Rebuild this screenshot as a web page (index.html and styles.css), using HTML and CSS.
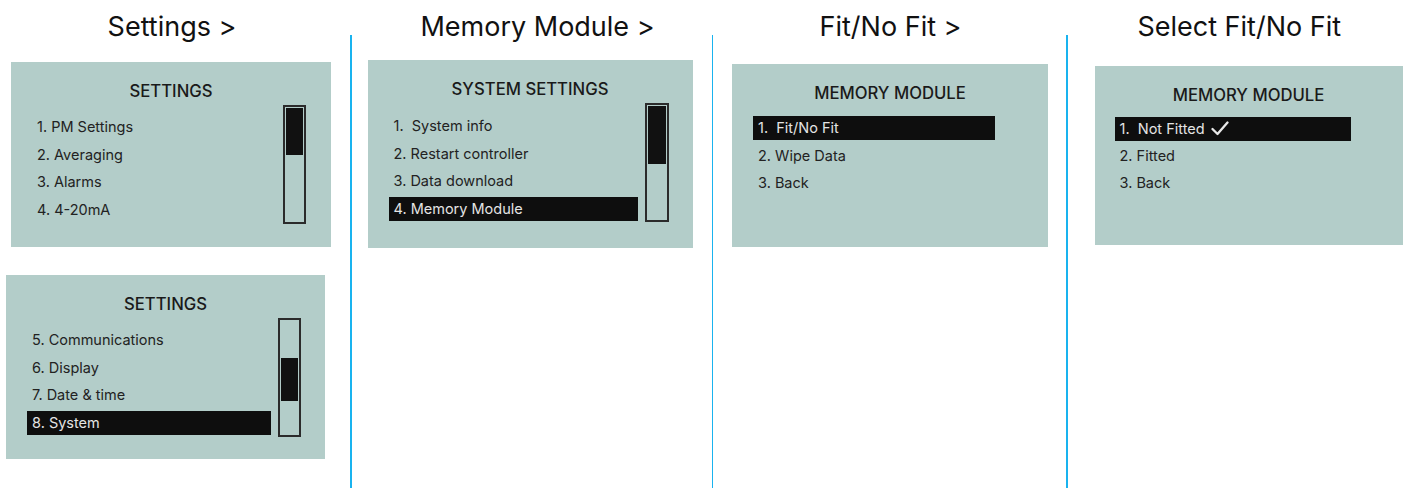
FILE: index.html
```html
<!DOCTYPE html>
<html lang="en">
<head>
    <meta charset="UTF-8">
    <meta name="viewport" content="width=device-width, initial-scale=1.0">
    <title>Memory Module | Menu Flow</title>

    <link rel="stylesheet" href="styles.css">
</head>
<body>
    <main class="flow">
        <section class="step step-1">
            <h2>Settings &gt;</h2>

            <div class="screen screen-a">
                <h3>SETTINGS</h3>
                <div class="screen-body">
                    <ul class="menu">
                        <li>1. PM Settings</li>
                        <li>2. Averaging</li>
                        <li>3. Alarms</li>
                        <li>4. 4-20mA</li>
                    </ul>
                    <div class="scrollbar"><div class="thumb thumb-a"></div></div>
                </div>
            </div>

            <div class="screen screen-b">
                <h3>SETTINGS</h3>
                <div class="screen-body">
                    <ul class="menu">
                        <li>5. Communications</li>
                        <li>6. Display</li>
                        <li>7. Date &amp; time</li>
                        <li class="active">8. System</li>
                    </ul>
                    <div class="scrollbar"><div class="thumb thumb-b"></div></div>
                </div>
            </div>
        </section>

        <div class="divider"></div>

        <section class="step step-2">
            <h2>Memory Module &gt;</h2>

            <div class="screen screen-c">
                <h3>SYSTEM SETTINGS</h3>
                <div class="screen-body">
                    <ul class="menu">
                        <li>1.&nbsp; System info</li>
                        <li>2. Restart controller</li>
                        <li>3. Data download</li>
                        <li class="active">4. Memory Module</li>
                    </ul>
                    <div class="scrollbar"><div class="thumb thumb-c"></div></div>
                </div>
            </div>
        </section>

        <div class="divider"></div>

        <section class="step step-3">
            <h2>Fit/No Fit &gt;</h2>

            <div class="screen screen-d">
                <h3>MEMORY MODULE</h3>
                <div class="screen-body">
                    <ul class="menu">
                        <li class="active">1.&nbsp; Fit/No Fit</li>
                        <li>2. Wipe Data</li>
                        <li>3. Back</li>
                    </ul>
                </div>
            </div>
        </section>

        <div class="divider"></div>

        <section class="step step-4">
            <h2>Select Fit/No Fit</h2>

            <div class="screen screen-e">
                <h3>MEMORY MODULE</h3>
                <div class="screen-body">
                    <ul class="menu">
                        <li class="active">1.&nbsp; Not Fitted
                            <svg class="tick" width="18" height="15" viewBox="0 0 18 15">
                                <path d="M1.5 8 L6.5 13 L16.5 1.5" fill="none" stroke="#e8e8e8" stroke-width="2.3" stroke-linecap="round" stroke-linejoin="round"/>
                            </svg>
                        </li>
                        <li>2. Fitted</li>
                        <li>3. Back</li>
                    </ul>
                </div>
            </div>
        </section>
    </main>
</body>
</html>
```

FILE: styles.css
```css
body { margin: 0; background: #fff; color: #111; font-family: Inter, Lato, sans-serif; }
.flow { display: flex; height: 488px; }
.divider { width: 1.5px; margin-top: 35px; background: #19b3ef; }

/* columns */
.step-1 { width: 350px; }
.step-2 { width: 360px; }
.step-3 { width: 353px; }
.step-4 { flex: 1; }

h2 { margin: 0; padding-top: 12px; height: 30px; line-height: 30px; font-size: 27px; font-weight: 400; text-align: center; }
.step-1 h2 { width: 344px; }
.step-2 h2 { padding-left: 12px; }
.step-3 h2 { padding-left: 2px; }
.step-4 h2 { padding-left: 6px; }

/* device screens */
.screen { background: #b3cdc9; padding: 17px 0 0 21px; box-sizing: border-box; }
.screen-a { width: 320px; height: 185px; margin: 20px 0 0 11px; }
.screen-b { width: 319px; height: 184px; margin: 28px 0 0 6px; }
.screen-c { width: 325px; height: 188px; margin: 18px 0 0 16px; }
.screen-d { width: 316px; height: 183px; margin: 22px 0 0 19px; }
.screen-e { width: 308px; height: 179px; margin: 24px 0 0 27px; padding-left: 20px; }

h3 { margin: 0 0 0 -21px; height: 24px; line-height: 24px; font-size: 16.7px; font-weight: 500; text-align: center; color: #1a1a1a; }
.screen-e h3 { margin-left: -20px; }

.screen-body { display: flex; gap: 7px; margin-top: 2px; }
.menu { list-style: none; margin: 10px 0 0; padding: 0; width: 244px; display: flex; flex-direction: column; gap: 3.5px; }
.screen-c .menu { width: 249px; margin-top: 11px; }
.screen-d .menu { width: 242px; margin-top: 9px; }
.screen-e .menu { width: 236px; margin-top: 8px; gap: 3px; }
.menu li { height: 24px; line-height: 24px; padding-left: 5px; font-size: 14.5px; color: #222; display: flex; align-items: center; gap: 6px; }
.menu li.active { background: #0e0e0e; color: #e4e4e4; }

.scrollbar { width: 23px; height: 119px; border: 2px solid #2b2b2b; box-sizing: border-box; padding: 1px; }
.screen-c .scrollbar { width: 24px; }
.thumb { background: #111; }
.thumb-a { height: 47px; }
.thumb-b { height: 43px; margin-top: 37px; }
.thumb-c { height: 58px; }
.tick { margin-top: -2px; }
```
